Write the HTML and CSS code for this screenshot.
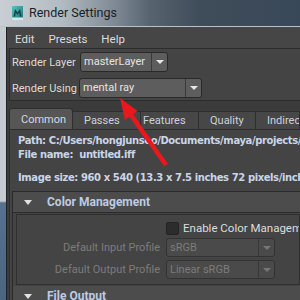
FILE: index.html
```html
<!DOCTYPE html>
<html lang="en">
<head>
    <meta charset="UTF-8">
    <title>Render Settings</title>
    <link rel="stylesheet" href="styles.css">
</head>
<body>
    <div class="window">
        <div class="titlebar">
            <svg class="app-icon" width="11" height="14" viewBox="0 0 11 14">
                <defs>
                    <linearGradient id="iconFill" x1="0" y1="0" x2="1" y2="1">
                        <stop offset="0" stop-color="#59c3c0"/>
                        <stop offset="1" stop-color="#1d7479"/>
                    </linearGradient>
                </defs>
                <rect width="11" height="14" fill="url(#iconFill)"/>
                <path d="M1.5 10.5 L3 3 L5.5 6.5 L8 3 L9.5 10.5 L7.8 10.5 L7.2 6.5 L5.5 9 L3.8 6.5 L3.2 10.5 Z" fill="#0f4548"/>
                <rect y="11.5" width="11" height="2.5" fill="#d7e6e8"/>
            </svg>
            <span class="title">Render Settings</span>
        </div>
        <div class="frame">
            <div class="frame-edge"></div>
            <div class="client">
                <div class="menubar">
                    <span>Edit</span>
                    <span>Presets</span>
                    <span>Help</span>
                </div>
                <div class="client-body">
                    <div class="layer-panel">
                        <div class="field-row">
                            <span class="field-label">Render Layer</span>
                            <div class="combo combo-layer">
                                <span class="combo-value">masterLayer</span>
                                <span class="combo-arrow"></span>
                            </div>
                        </div>
                        <div class="field-row">
                            <span class="field-label">Render Using</span>
                            <div class="combo combo-renderer">
                                <span class="combo-value">mental ray</span>
                                <span class="combo-arrow"></span>
                            </div>
                        </div>
                    </div>

                    <div class="tabs">
                        <div class="tab tab-common active">Common</div>
                        <div class="tab tab-passes">Passes</div>
                        <div class="tab tab-features">Features</div>
                        <div class="tab tab-quality">Quality</div>
                        <div class="tab tab-indirect">Indirect Lighting</div>
                    </div>

                    <div class="tab-page">
                        <div class="info">
                            <div>Path: C:/Users/hongjunsoo/Documents/maya/projects/default/images/</div>
                            <div>File name:&nbsp; untitled.iff</div>
                            <div class="info-gap">Image size: 960 x 540 (13.3 x 7.5 inches 72 pixels/inch)</div>
                        </div>

                        <div class="section">
                            <div class="section-head"><span class="twisty"></span>Color Management</div>
                            <div class="section-body">
                                <div class="check-row">
                                    <span class="checkbox"></span>
                                    <span>Enable Color Management</span>
                                </div>
                                <div class="prop-row">
                                    <span class="prop-label">Default Input Profile</span>
                                    <div class="combo combo-disabled">
                                        <span class="combo-value">sRGB</span>
                                        <span class="combo-arrow"></span>
                                    </div>
                                </div>
                                <div class="prop-row">
                                    <span class="prop-label">Default Output Profile</span>
                                    <div class="combo combo-disabled">
                                        <span class="combo-value">Linear sRGB</span>
                                        <span class="combo-arrow"></span>
                                    </div>
                                </div>
                            </div>
                            <div class="section-head"><span class="twisty"></span>File Output</div>
                        </div>
                    </div>
                </div>
            </div>
        </div>

        <!-- red callout pointing at the renderer dropdown -->
        <svg class="callout" width="300" height="300" viewBox="0 0 300 300">
            <line x1="166" y1="165" x2="131" y2="115" stroke="#e8181c" stroke-width="4.5"/>
            <polygon points="120,98 137.5,111 125,120" fill="#e8181c"/>
        </svg>
    </div>
</body>
</html>
```

FILE: styles.css
```css
body {
    margin: 0;
    width: 300px;
    height: 300px;
    overflow: hidden;
    background-color: #444;
    font-family: Roboto, "Noto Sans", sans-serif;
    font-size: 11px;
}
.window {
    position: relative;
    height: 300px;
    overflow: hidden;
    display: flex;
    flex-direction: column;
}
.titlebar {
    height: 27px;
    flex: none;
    box-sizing: border-box;
    border-bottom: 1px solid #b7c2ca;
    display: flex;
    align-items: center;
    gap: 6px;
    padding-left: 12px;
    background: linear-gradient(90deg, #c9cfd4 0, #b4bcc3 60px, #7e8994 115px, #57646f 150px, #3f4c59 200px, #394859 100%);
}
.app-icon {
    display: block;
}
.title {
    font-size: 12.5px;
    color: #1b1f24;
    padding-bottom: 1px;
}
.frame {
    flex: 1;
    display: flex;
    min-height: 0;
}
.frame-edge {
    width: 6px;
    flex: none;
    background: linear-gradient(#c5cbd0 0, #c5cbd0 174px, #56718d 176px, #4a6580 100%);
}
.client {
    flex: 1;
    min-width: 0;
    display: flex;
    flex-direction: column;
    background-color: #3b3b3b;
    border-left: 1px solid #222;
}
.menubar {
    height: 21px;
    flex: none;
    box-sizing: border-box;
    padding: 2px 0 0 8px;
    display: flex;
    align-items: center;
    gap: 14px;
    font-size: 11.5px;
    background-color: #464646;
    color: #dcdcdc;
}
.client-body {
    flex: 1;
    min-height: 0;
    overflow: hidden;
    padding-left: 2px;
}
.layer-panel {
    display: flex;
    flex-direction: column;
    gap: 6px;
    padding: 3px 0 2px 2px;
    background-color: #444;
    border-top: 1px solid #2c2c2c;
    border-bottom: 1px solid #2c2c2c;
    border-left: 1px solid #2c2c2c;
}
.field-row {
    display: flex;
    align-items: center;
    height: 20px;
}
.field-label {
    width: 67px;
    flex: none;
    padding-top: 1px;
    white-space: nowrap;
    color: #dedbd0;
}
.combo {
    display: flex;
    height: 20px;
    box-sizing: border-box;
    border: 1px solid #292929;
    border-radius: 3px;
    background-color: #5d5d5d;
    color: #e4e4e4;
}
.combo-layer {
    width: 88px;
    margin-left: 1px;
}
.combo-renderer {
    width: 123px;
}
.combo-value {
    flex: 1;
    padding-left: 3px;
    line-height: 18px;
    white-space: nowrap;
    overflow: hidden;
}
.combo-arrow {
    width: 15px;
    flex: none;
    border-left: 1px solid #3a3a3a;
    display: flex;
    align-items: center;
    justify-content: center;
}
.combo-arrow::before {
    content: "";
    border-left: 4px solid transparent;
    border-right: 4px solid transparent;
    border-top: 4px solid #e6e6e6;
}
.combo-disabled {
    width: 109px;
    height: 19px;
    flex: none;
    background-color: #4a4a4a;
    border-color: #333;
    color: #7c7c7c;
}
.combo-disabled .combo-value {
    line-height: 17px;
}
.combo-disabled .combo-arrow {
    border-left-color: #383838;
}
.combo-disabled .combo-arrow::before {
    border-top-color: #777;
}
.tabs {
    display: flex;
    align-items: flex-end;
    height: 21px;
    margin-top: 7px;
    font-size: 11px;
}
.tab {
    height: 18px;
    flex: none;
    box-sizing: border-box;
    padding-left: 11px;
    line-height: 17px;
    white-space: nowrap;
    overflow: hidden;
    color: #cbd2dc;
    background-color: #474747;
    border: 1px solid #2e2e2e;
    border-bottom: none;
    border-left: none;
}
.tab.active {
    height: 21px;
    line-height: 21px;
    background-color: #565656;
    border-left: 1px solid #2e2e2e;
    border-radius: 3px 3px 0 0;
    color: #d3d9e2;
}
.tab-common { width: 64px; }
.tab-passes { width: 68px; }
.tab-features { width: 58px; padding-left: 2px; }
.tab-quality { width: 57px; }
.tab-indirect { flex: 1; }
.tab-page {
    border-top: 1px solid #2e2e2e;
    border-left: 1px solid #2e2e2e;
    background-color: #444;
    padding: 4px 0 0 8px;
    overflow: hidden;
}
.info {
    font-family: "DejaVu Sans", sans-serif;
    font-weight: bold;
    font-size: 10px;
    letter-spacing: -0.4px;
    line-height: 14px;
    color: #c9d5e8;
    white-space: nowrap;
    overflow: hidden;
}
.info-gap {
    margin-top: 9px;
}
.section {
    margin: 6px 0 0 -6px;
    border-left: 1px solid #2b2b2b;
    border-top: 1px solid #2b2b2b;
}
.section-head {
    height: 20px;
    display: flex;
    align-items: center;
    padding-left: 11px;
    gap: 15px;
    font-weight: bold;
    font-size: 12px;
    color: #bccbe3;
    background-color: #4c4c4c;
    border-bottom: 1px solid #2b2b2b;
}
.twisty {
    width: 0;
    height: 0;
    border-left: 4px solid transparent;
    border-right: 4px solid transparent;
    border-top: 5px solid #e2e2e2;
}
.section-body {
    margin: 1px 0 1px 3px;
    height: 63px;
    border: 1px solid #2f2f2f;
    background-color: #444;
    display: flex;
    flex-direction: column;
    padding-top: 6px;
    gap: 3px;
    overflow: hidden;
}
.check-row {
    display: flex;
    align-items: center;
    gap: 4px;
    padding-left: 149px;
    height: 14px;
    font-size: 11.5px;
    color: #dcdcdc;
    white-space: nowrap;
}
.checkbox {
    width: 13px;
    height: 13px;
    flex: none;
    box-sizing: border-box;
    background-color: #2c2c2c;
    border: 1px solid #232323;
    border-radius: 2px;
}
.prop-row {
    display: flex;
    align-items: center;
    gap: 6px;
}
.prop-label {
    width: 143px;
    flex: none;
    text-align: right;
    color: #7c7c7c;
    white-space: nowrap;
}
.callout {
    position: absolute;
    left: 0;
    top: 0;
    pointer-events: none;
}
```
